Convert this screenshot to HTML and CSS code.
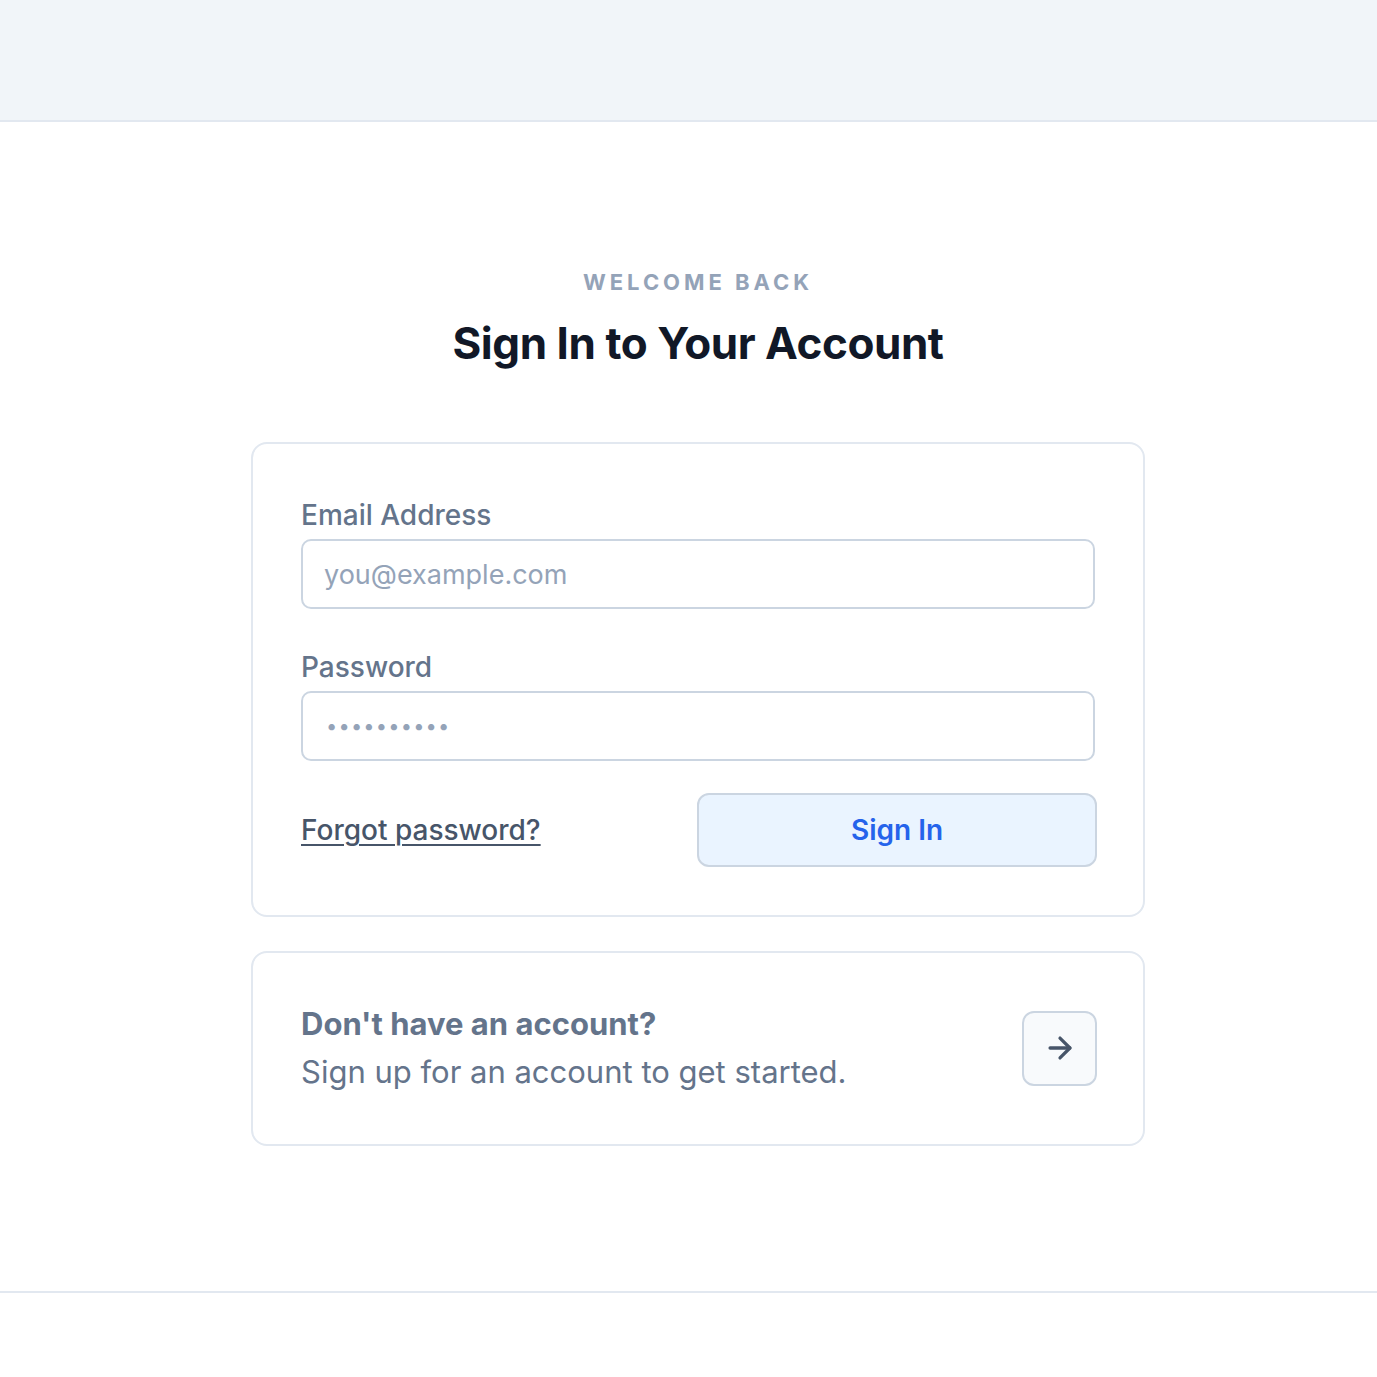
FILE: index.html
```html
<!DOCTYPE html>
<html lang="en">
<head>
<meta charset="utf-8">
<title>Sign In</title>
<link rel="stylesheet" href="styles.css">
</head>
<body>
<header class="topbar"></header>
<main class="main">
  <div class="intro">
    <p class="eyebrow">WELCOME BACK</p>
    <h1 class="title">Sign In to Your Account</h1>
  </div>
  <form class="card form-card">
    <div class="field">
      <label class="label" for="email">Email Address</label>
      <input class="input" id="email" type="email" placeholder="you@example.com">
    </div>
    <div class="field">
      <label class="label" for="password">Password</label>
      <input class="input input-pass" id="password" type="password" placeholder="••••••••••">
    </div>
    <div class="actions">
      <a class="forgot" href="#">Forgot password?</a>
      <button class="btn-primary" type="button">Sign In</button>
    </div>
  </form>
  <div class="card signup-card">
    <div class="signup-text">
      <p class="signup-title">Don't have an account?</p>
      <p class="signup-sub">Sign up for an account to get started.</p>
    </div>
    <button class="arrow-btn" type="button" aria-label="Sign up">
      <svg width="34" height="34" viewBox="0 0 24 24" fill="none" stroke="currentColor" stroke-width="2.3" stroke-linecap="round" stroke-linejoin="round"><path d="M5 12h14"/><path d="M12 5l7 7-7 7"/></svg>
    </button>
  </div>
</main>
</body>
</html>
```
FILE: styles.css
```css
* { box-sizing: border-box; }
html, body { margin: 0; padding: 0; background: #ffffff; }
body {
  font-family: Inter, "Noto Sans", "Liberation Sans", sans-serif;
  color: #0f172a;
}
.topbar {
  height: 122px;
  background: #f1f5f9;
  border-bottom: 2px solid #e2e8f0;
}
.main {
  padding: 144px 0 145px 19px;
  border-bottom: 2px solid #e2e8f0;
  display: flex;
  flex-direction: column;
  align-items: center;
}
.intro { text-align: center; margin-bottom: 74px; }
.eyebrow {
  margin: 0 0 19px;
  font-size: 22px;
  line-height: 33px;
  font-weight: 700;
  letter-spacing: 0.18em;
  color: #94a3b8;
}
.title {
  margin: 0;
  font-size: 44px;
  line-height: 50px;
  font-weight: 700;
  letter-spacing: -0.01em;
  color: #111827;
}
.card {
  width: 894px;
  border: 2px solid #e2e8f0;
  border-radius: 16px;
  background: #fff;
}
.form-card { padding: 50px 48px 48px; margin: 0; }
.field { display: flex; flex-direction: column; }
.field + .field { margin-top: 37px; }
.label {
  font-size: 28px;
  line-height: 42px;
  font-weight: 500;
  color: #64748b;
  margin-bottom: 3px;
}
.input {
  height: 70px;
  border: 2px solid #cbd5e1;
  border-radius: 10px;
  padding: 0 21px;
  font-family: inherit;
  font-size: 27px;
  color: #334155;
  background: #fff;
  outline: none;
}
.input::placeholder { color: #94a3b8; }
.input-pass { padding: 0 0 6px 23px; }
.input-pass::placeholder { font-size: 20px; letter-spacing: 1.2px; }
.actions {
  margin-top: 32px;
  display: flex;
  align-items: center;
  justify-content: space-between;
}
.forgot {
  font-size: 28px;
  font-weight: 500;
  color: #475569;
  text-decoration: underline;
  text-underline-offset: 4px;
  text-decoration-thickness: 2px;
}
.btn-primary {
  width: 400px;
  height: 74px;
  margin-right: -2px;
  border: 2px solid #cbd5e1;
  border-radius: 12px;
  background: #eaf4ff;
  color: #2563eb;
  font-family: inherit;
  font-size: 28px;
  font-weight: 600;
}
.signup-card {
  margin-top: 34px;
  padding: 47px 48px 48px;
  display: flex;
  align-items: center;
  justify-content: space-between;
}
.signup-title {
  margin: 0;
  font-size: 31px;
  line-height: 48px;
  font-weight: 700;
  color: #64748b;
}
.signup-sub {
  margin: 0;
  font-size: 31px;
  line-height: 48px;
  font-weight: 400;
  color: #64748b;
}
.arrow-btn {
  width: 75px;
  height: 75px;
  margin-right: -2px;
  border: 2px solid #cbd5e1;
  border-radius: 12px;
  background: #f8fafc;
  color: #475569;
  display: flex;
  align-items: center;
  justify-content: center;
  padding: 0;
}
```
